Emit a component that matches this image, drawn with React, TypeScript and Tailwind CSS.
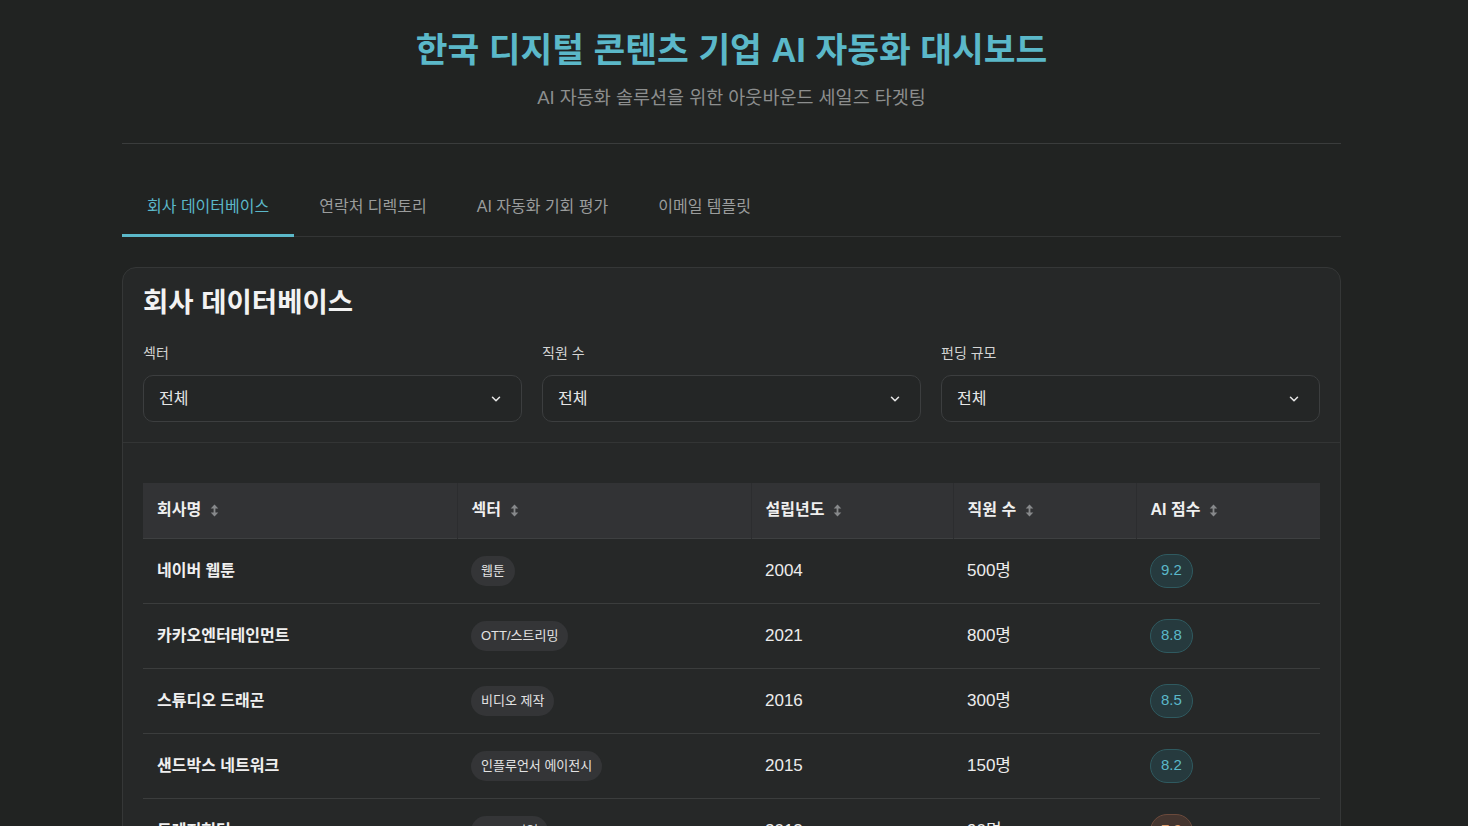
import React, { useState } from 'react';

// Interfaces
interface Company {
    id: number;
    name: string;
    sector: string;
    founded: number;
    employees: string;
    score: number;
}

const companies: Company[] = [
    { id: 1, name: '네이버 웹툰', sector: '웹툰', founded: 2004, employees: '500명', score: 9.2 },
    { id: 2, name: '카카오엔터테인먼트', sector: 'OTT/스트리밍', founded: 2021, employees: '800명', score: 8.8 },
    { id: 3, name: '스튜디오 드래곤', sector: '비디오 제작', founded: 2016, employees: '300명', score: 8.5 },
    { id: 4, name: '샌드박스 네트워크', sector: '인플루언서 에이전시', founded: 2015, employees: '150명', score: 8.2 },
    { id: 5, name: '트레져헌터', sector: 'MCN 기업', founded: 2013, employees: '90명', score: 7.9 }
];

const tabs = ['회사 데이터베이스', '연락처 디렉토리', 'AI 자동화 기회 평가', '이메일 템플릿'];

const columns = [
    { label: '회사명', width: 'w-[314px]' },
    { label: '섹터', width: 'w-[294px]' },
    { label: '설립년도', width: 'w-[202px]' },
    { label: '직원 수', width: 'w-[183px]' },
    { label: 'AI 점수', width: 'w-[184px]' }
];

function SortIcon() {
    return (
        <svg width="9" height="13" viewBox="0 0 9 13" className="ml-[9px] mt-[1px]" fill="#87898b">
            <path d="M4.5 0.5 L8.3 4.6 L0.7 4.6 Z" />
            <rect x="3.6" y="4" width="1.8" height="5" />
            <path d="M4.5 12.5 L8.3 8.4 L0.7 8.4 Z" />
        </svg>
    );
}

function Chevron() {
    return (
        <svg width="14" height="14" viewBox="0 0 24 24" fill="none" stroke="#e6e6e6" strokeWidth="2.6" strokeLinecap="round" strokeLinejoin="round">
            <path d="M6 9l6 6 6-6" />
        </svg>
    );
}

function FilterSelect({ label }: { label: string }) {
    return (
        <div className="flex-1">
            <div className="text-[14px] leading-[20px] text-[#d4d4d4] mb-[12px]">{label}</div>
            <div className="h-[47px] rounded-[10px] border border-[#3c3e3f] bg-[#242626] flex items-center justify-between pl-[15px] pr-[18px]">
                <span className="text-[16px] text-[#e6e6e6]">전체</span>
                <Chevron />
            </div>
        </div>
    );
}

function ScoreBadge({ score }: { score: number }) {
    const high = score >= 8;
    return (
        <span
            className={
                high
                    ? 'inline-flex items-center h-[34px] px-[10px] rounded-full border border-[#2f5a60] bg-[#263a3e] text-[15px] text-[#5bb8c9]'
                    : 'inline-flex items-center h-[34px] px-[10px] rounded-full border border-[#6b4a3c] bg-[#44352f] text-[15px] text-[#e0a070]'
            }
        >
            {score.toFixed(1)}
        </span>
    );
}

export default function App() {
    const [activeTab, setActiveTab] = useState(0);

    return (
        <div
            className="min-h-screen bg-[#212322] text-[#e8e8e8]"
            style={{ fontFamily: '"Liberation Sans", "Noto Sans CJK KR", sans-serif' }}
        >
            <div className="ml-[122px] w-[1219px]">
                {/* Header */}
                <div className="pt-[30px] pb-[31px] border-b border-[#3a3c3c] text-center">
                    <h1 className="text-[34.5px] leading-[40px] font-bold text-[#5bb8c9]">한국 디지털 콘텐츠 기업 AI 자동화 대시보드</h1>
                    <p className="mt-[14px] text-[18.5px] leading-[28px] text-[#8c8e8e]">AI 자동화 솔루션을 위한 아웃바운드 세일즈 타겟팅</p>
                </div>

                {/* Tabs */}
                <div className="mt-[32px] flex border-b border-[#333535]">
                    {tabs.map((tab, i) => (
                        <button
                            key={tab}
                            onClick={() => setActiveTab(i)}
                            className={
                                i === activeTab
                                    ? 'px-[25px] pt-[19px] pb-[15px] -mb-px border-b-[3px] border-[#5bb8c9] text-[16px] leading-[24px] text-[#5bb8c9]'
                                    : 'px-[25px] pt-[19px] pb-[15px] -mb-px border-b-[3px] border-transparent text-[16px] leading-[24px] text-[#9a9c9c]'
                            }
                        >
                            {tab}
                        </button>
                    ))}
                </div>

                {/* Card */}
                <div className="mt-[30px] rounded-[14px] border border-[#353737] bg-[#262828]">
                    <div className="px-5 pt-[19px] pb-5 border-b border-[#333535]">
                        <h2 className="text-[27.5px] leading-[32px] font-bold text-[#f2f2f2] mb-[24px]">회사 데이터베이스</h2>
                        <div className="flex gap-5">
                            <FilterSelect label="섹터" />
                            <FilterSelect label="직원 수" />
                            <FilterSelect label="펀딩 규모" />
                        </div>
                    </div>

                    <div className="px-5 pt-[40px] pb-5">
                        <table className="w-full border-collapse">
                            <thead>
                                <tr className="bg-[#323335] border-b border-[#3e4041]">
                                    {columns.map((col, i) => (
                                        <th
                                            key={col.label}
                                            className={
                                                col.width +
                                                ' h-[55px] px-[14px] text-left text-[16px] font-bold text-[#efefef] ' +
                                                (i < columns.length - 1 ? 'border-r border-[#2c2d2f]' : '')
                                            }
                                        >
                                            <span className="inline-flex items-center">
                                                {col.label}
                                                <SortIcon />
                                            </span>
                                        </th>
                                    ))}
                                </tr>
                            </thead>
                            <tbody>
                                {companies.map((c) => (
                                    <tr key={c.id} className="border-b border-[#3b3d3d]">
                                        <td className="h-[65px] px-[14px] text-[16px] font-bold text-[#f0f0f0]">{c.name}</td>
                                        <td className="px-[14px]">
                                            <span className="inline-flex items-center h-[30px] px-[10px] rounded-full bg-[#343537] text-[13px] text-[#e2e2e2]">
                                                {c.sector}
                                            </span>
                                        </td>
                                        <td className="px-[14px] text-[17px] text-[#ececec]">{c.founded}</td>
                                        <td className="px-[14px] text-[17px] text-[#ececec]">{c.employees}</td>
                                        <td className="px-[14px]">
                                            <ScoreBadge score={c.score} />
                                        </td>
                                    </tr>
                                ))}
                            </tbody>
                        </table>
                    </div>
                </div>
            </div>
        </div>
    );
}
